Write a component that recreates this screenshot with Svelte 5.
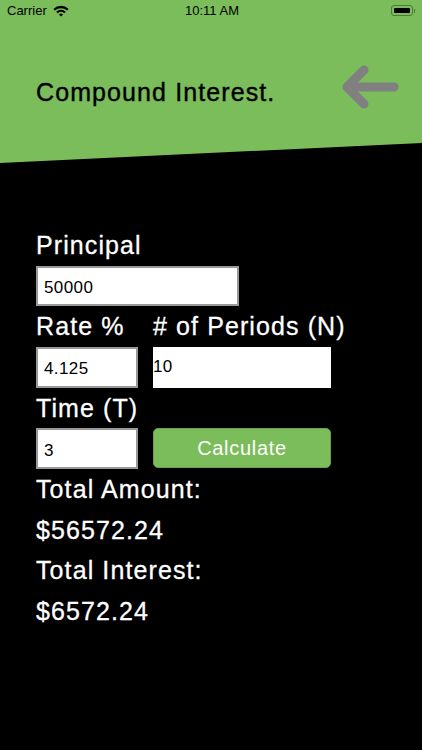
<script>
    let principal = "50000";
    let rate = "4.125";
    let periods = "10";
    let time = "3";
</script>

<div class="page">
    <header>
        <div class="status">
            <span class="carrier">Carrier</span>
            <svg class="wifi" width="16" height="12" viewBox="0 0 16 12">
                <path d="M0.4 3.9A11 11 0 0 1 15.6 3.9L14 5.6A8.7 8.7 0 0 0 2 5.6Z" />
                <path d="M3.2 6.7A7 7 0 0 1 12.8 6.7L11.2 8.3A4.8 4.8 0 0 0 4.8 8.3Z" />
                <path d="M6 9.5A3 3 0 0 1 10 9.5L8 11.6Z" />
            </svg>
            <span class="clock">10:11 AM</span>
            <div class="battery">
                <div class="cell"></div>
            </div>
            <div class="nub"></div>
        </div>
        <div class="title-row">
            <h1>Compound Interest.</h1>
            <svg class="back" width="58" height="46" viewBox="0 0 58 46">
                <path d="M53 23H6M23 6L6 23L23 40" />
            </svg>
        </div>
    </header>

    <main>
        <label class="heading" for="principal">Principal</label>
        <input id="principal" class="wide" bind:value={principal} />

        <div class="grid">
            <label class="heading" for="rate">Rate %</label>
            <label class="heading" for="periods"># of Periods (N)</label>
            <input id="rate" bind:value={rate} />
            <input id="periods" class="plain" bind:value={periods} />
            <label class="heading" for="time">Time (T)</label>
            <span></span>
            <input id="time" bind:value={time} />
            <button>Calculate</button>
        </div>

        <p>Total Amount:</p>
        <p>$56572.24</p>
        <p>Total Interest:</p>
        <p>$6572.24</p>
    </main>
</div>

<style>
    :global(body) {
        margin: 0;
        background: #000;
    }

    .page {
        height: 750px;
        overflow: hidden;
        background: #000;
        color: #fff;
        font-family: "Liberation Sans", sans-serif;
    }

    header {
        height: 163px;
        background: #7bbc5b;
        color: #000;
        clip-path: polygon(0 0, 100% 0, 100% 143px, 0 163px);
    }

    .status {
        display: flex;
        align-items: center;
        height: 21px;
        padding: 0 7px 0 7px;
        font-size: 13px;
        position: relative;
    }

    .wifi {
        margin-left: 6px;
        fill: #000;
    }

    .clock {
        position: absolute;
        left: 185px;
    }

    .battery {
        box-sizing: border-box;
        margin-left: auto;
        width: 22px;
        height: 11px;
        padding: 2px;
        border: 1px solid #4d7a38;
        border-radius: 3px;
    }

    .cell {
        height: 100%;
        background: #000;
        border-radius: 1px;
    }

    .nub {
        width: 1px;
        height: 4px;
        margin-left: 1px;
        background: #4d7a38;
    }

    .title-row {
        display: flex;
        align-items: flex-start;
        justify-content: space-between;
        padding: 43px 23px 0 36px;
    }

    h1 {
        margin: 14px 0 0;
        font-size: 25px;
        font-weight: 400;
        letter-spacing: 1.1px;
        -webkit-text-stroke: 0.4px #000;
    }

    .back {
        fill: none;
        stroke: #808080;
        stroke-width: 9;
        stroke-linecap: round;
        stroke-linejoin: round;
    }

    main {
        padding: 62px 0 0 36px;
    }

    .heading,
    p {
        display: block;
        margin: 0;
        height: 40.67px;
        line-height: 40.67px;
        font-size: 25px;
        letter-spacing: 1.1px;
        white-space: nowrap;
        -webkit-text-stroke: 0.3px #fff;
    }

    input {
        display: block;
        box-sizing: border-box;
        width: 102px;
        height: 40.67px;
        margin: 0;
        padding: 4px 0 0 6px;
        border: 2px solid #999;
        border-radius: 0;
        background: #fff;
        color: #000;
        font-family: "Liberation Sans", sans-serif;
        font-size: 17px;
        letter-spacing: 0.4px;
        outline: none;
    }

    .wide {
        width: 203px;
    }

    .plain {
        width: 178px;
        padding: 0;
        border: 0;
    }

    .grid {
        display: grid;
        grid-template-columns: 102px 178px;
        column-gap: 15px;
    }

    button {
        height: 40px;
        padding: 0;
        border: 1px solid #6a9f50;
        border-radius: 5px;
        background: #7bbc5b;
        color: #fff;
        font-family: inherit;
        font-size: 20px;
        letter-spacing: 0.7px;
    }
</style>
